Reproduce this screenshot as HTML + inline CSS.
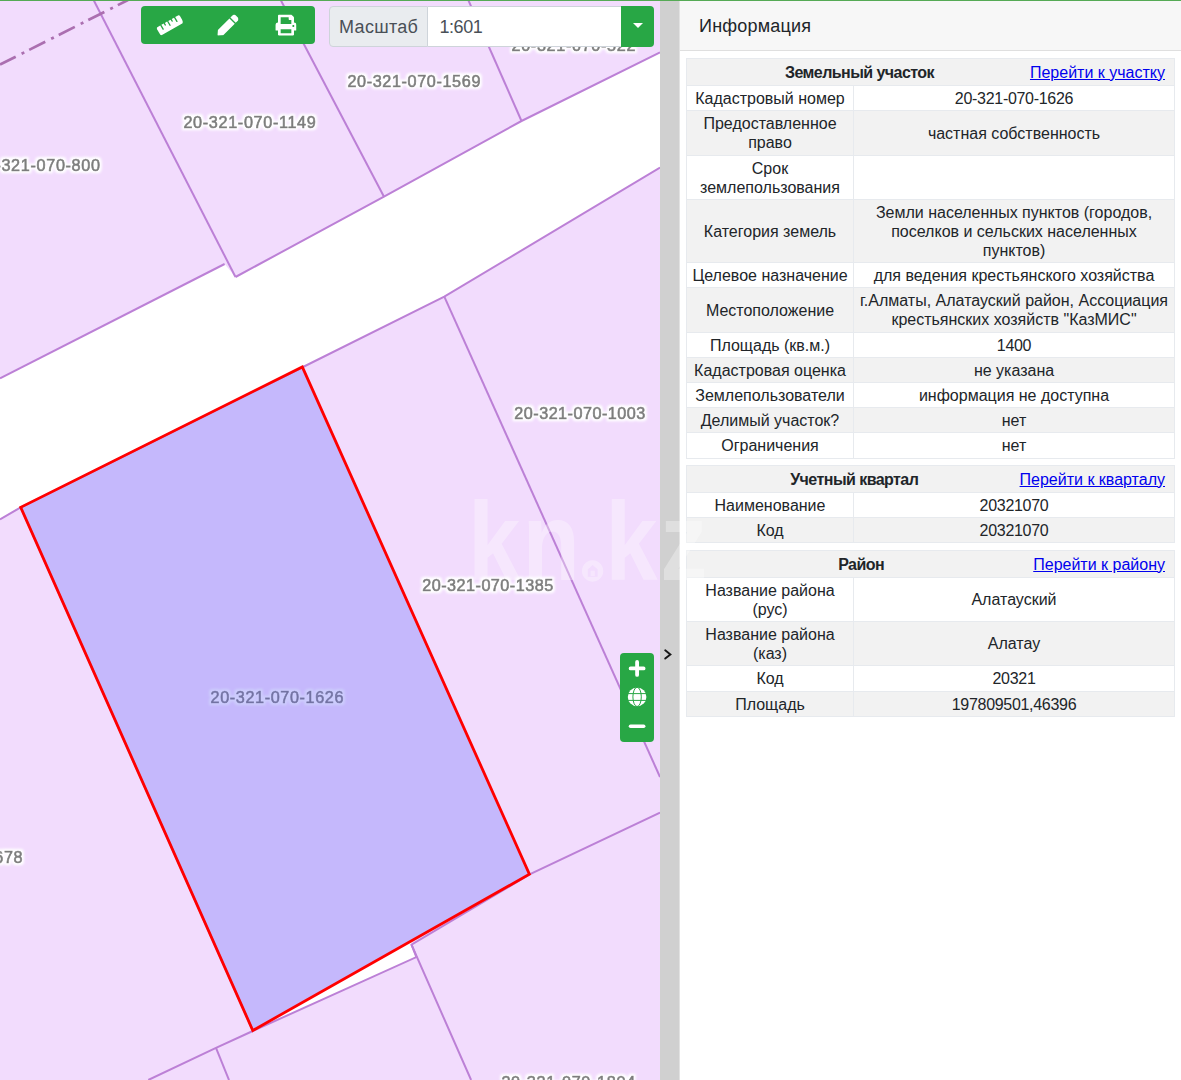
<!DOCTYPE html>
<html lang="ru">
<head>
<meta charset="utf-8">
<title>Информация</title>
<style>
*{box-sizing:border-box}
html,body{margin:0;padding:0}
body{width:1181px;height:1080px;overflow:hidden;position:relative;background:#fff;
  font-family:"Liberation Sans",sans-serif;font-size:16px;color:#212529}
#topline{position:absolute;left:0;top:0;width:1181px;height:1px;background:#55aa55;z-index:20}
#map{position:absolute;left:0;top:0;width:660px;height:1080px;overflow:hidden;background:#fff}
#map svg{position:absolute;left:0;top:0}
.lbl{font-family:"Liberation Sans",sans-serif;font-weight:normal;font-size:16.2px;fill:#7c7c7c;stroke:#7c7c7c;stroke-width:.7px;filter:url(#halo)}
#split{position:absolute;left:660px;top:0;width:20px;height:1080px;background:#d0d0d0;border-right:1px solid #e2e2e2}
#split svg{position:absolute;left:3px;top:648px}
#tools{position:absolute;left:140.8px;top:5.8px;width:174.4px;height:38.6px;background:#28a745;border-radius:4px;display:flex}
#tools div{width:58px;height:38px;position:relative}
#tools svg{position:absolute;left:50%;top:50%;transform:translate(-50%,-49%)}
#scale{position:absolute;left:328.6px;top:6px;width:325.6px;height:40.6px;display:flex;font-size:18px}
#scale .addon{width:99.5px;height:40.6px;background:#e9ecef;border:1px solid #ced4da;border-radius:4px 0 0 4px;
  color:#495057;line-height:41px;padding-left:9.5px;white-space:nowrap;letter-spacing:.3px;overflow:hidden}
#scale .inp{flex:1;height:40.6px;background:#fff;border:1px solid #ced4da;border-left:0;border-right:0;color:#495057;line-height:40.4px;padding-left:11.3px;letter-spacing:-.4px;overflow:hidden}
#scale .dd{width:33px;height:40.6px;background:#28a745;border-radius:0 4px 4px 0;position:relative}
#scale .dd i{position:absolute;left:11.6px;top:17.4px;border:5.4px solid transparent;border-top:5.4px solid #fff;border-bottom:0}
#zoomc{position:absolute;left:620.4px;top:653.2px;width:34px;height:88.7px;background:#28a745;border-radius:4px}
#zoomc svg{position:absolute;left:0;top:0}
#wm{position:absolute;left:450px;top:480px;z-index:15;pointer-events:none}
#info{position:absolute;left:680px;top:0;width:501px;height:1080px;background:#fff}
#info h1{margin:0;height:51px;padding:16px 0 0 19px;font-size:18px;letter-spacing:.2px;font-weight:normal;background:#f7f7f7;border-bottom:1px solid #dfdfdf;line-height:20px;color:#212529}
table{position:absolute;left:6px;width:489px;border-collapse:collapse;table-layout:fixed;font-size:16px}
td,th{border:1px solid #e7eaee;padding:0 2px;text-align:center;vertical-align:middle;line-height:19px;white-space:nowrap;overflow:hidden}
th{height:27px;font-weight:bold;letter-spacing:-.55px}
th a{float:right;font-weight:normal;color:#0000ee;text-decoration:underline;padding-right:7px;letter-spacing:0}
tr.g td,tr.g th{background:#f2f2f2}
tr.h1 td{height:25px}
tr.h2 td{height:45px}
tr.h3 td{height:63px}
tr.h2.s td{height:44px}
tr.h1.p td{height:26px}
col.c1{width:167px}
td.n{letter-spacing:-.3px}
</style>
</head>
<body>
<div id="topline"></div>
<div id="map">
<!--MAPSVG-->
<svg width="660" height="1080" viewBox="0 0 660 1080">
<defs><filter id="halo" x="-5%" y="-25%" width="110%" height="150%"><feMorphology in="SourceAlpha" operator="dilate" radius="1.5" result="d"/><feGaussianBlur in="d" stdDeviation="0.8" result="b"/><feFlood flood-color="#fff" flood-opacity="1"/><feComposite in2="b" operator="in" result="h"/><feMerge><feMergeNode in="h"/><feMergeNode in="SourceGraphic"/></feMerge></filter></defs>
<rect width="660" height="1080" fill="#f2dcfd"/>
<polygon fill="#fff" points="0,378.3 224.6,264 235.5,277 384,196.7 521.5,121 660,52.4 660,167.6 444.3,296.7 303,367 20.7,507.3 0,519.4"/>
<polygon fill="#fff" points="252.8,1030.6 411.5,941.5 411.5,944.7 416.4,957.1"/>
<g fill="none" stroke="#bc80d6" stroke-width="2">
<path d="M93.6,0 L235.5,277"/>
<path d="M0,378.3 L224.6,264"/>
<path d="M235.5,277 L384,196.7 L521.5,121 L660,52.4"/>
<path d="M280.7,0 L384,196.7"/>
<path d="M468.3,0 L521.5,121"/>
<path d="M0,519.4 L20.7,507.3 L303,367 L444.3,296.7 L660,167.6"/>
<path d="M444.3,296.7 L660,777"/>
<path d="M20.7,507.3 L252.8,1030.5"/>
<path d="M660,812.6 L529.6,874.4 L411.5,944.7 L471.1,1080"/>
<path d="M148.3,1080 L216,1047.8 L252.8,1031 L416.4,957.1 L411.5,944.7"/>
<path d="M216,1047.8 L229,1080"/>
</g>
<path d="M0,64.6 L128,0" fill="none" stroke="#ab6fb0" stroke-width="2.7" stroke-dasharray="18 6.6 3 5.5" stroke-dashoffset="0.4"/>
<g>
<text class="lbl" x="183.4" y="127.7" textLength="132.4" lengthAdjust="spacing">20-321-070-1149</text>
<text class="lbl" x="347.4" y="87.4" textLength="133.0" lengthAdjust="spacing">20-321-070-1569</text>
<text class="lbl" x="511.5" y="51" textLength="123.9" lengthAdjust="spacing">20-321-070-522</text>
<text class="lbl" x="-24.0" y="170.6" textLength="124.0" lengthAdjust="spacing">20-321-070-800</text>
<text class="lbl" x="514.3" y="418.9" textLength="131.0" lengthAdjust="spacing">20-321-070-1003</text>
<text class="lbl" x="422.2" y="590.9" textLength="131.0" lengthAdjust="spacing">20-321-070-1385</text>
<text class="lbl" style="fill:#686868;stroke:#686868" x="210.6" y="702.6" textLength="132.8" lengthAdjust="spacing">20-321-070-1626</text>
<text class="lbl" x="-101.0" y="862.9" textLength="123.6" lengthAdjust="spacing">20-321-070-678</text>
<text class="lbl" x="501.4" y="1087.9" textLength="133.8" lengthAdjust="spacing">20-321-070-1804</text>
</g>
<polygon points="302.3,366.9 529.4,874.2 252.8,1030.5 20.7,507.3" fill="rgb(130,130,250)" fill-opacity=".4" stroke="none"/>
<polygon points="302.3,366.9 529.4,874.2 252.8,1030.5 20.7,507.3" fill="none" stroke="#ff0000" stroke-width="2.8" stroke-linejoin="miter"/>
</svg>
<!--/MAPSVG-->
</div>
<div id="tools"><div><svg width="26.67" height="21.33" viewBox="0 0 640 512"><path fill="#fff" d="M635.7 167.2L556.1 31.7c-8.8-15-28.3-20.1-43.5-11.5l-69 39.1L503.3 161c2.200 3.800.900 8.500-2.900 10.700l-13.800 7.800c-3.800 2.200-8.700.9-10.900-2.900L416 75l-55.200 31.300 27.900 47.400c2.200 3.800.9 8.500-2.900 10.700l-13.800 7.800c-3.800 2.200-8.700.9-10.900-2.900L333.200 122 278 153.300 337.800 255c2.200 3.700.9 8.500-2.900 10.700l-13.800 7.800c-3.800 2.200-8.700.9-10.900-2.900l-59.700-101.700-55.200 31.300 27.900 47.400c2.200 3.800.9 8.500-2.900 10.700l-13.800 7.800c-3.800 2.200-8.700.9-10.900-2.900l-27.900-47.500-55.200 31.300 59.700 101.700c2.200 3.700.9 8.500-2.900 10.700l-13.800 7.800c-3.800 2.200-8.700.9-10.900-2.900L84.900 262.900l-69 39.100C.7 310.700-4.600 329.800 4.200 344.800l79.600 135.600c8.800 15 28.300 20.100 43.500 11.500L624.100 210c15.200-8.600 20.400-27.800 11.600-42.800z"/></svg></div><div><svg width="21.33" height="21.33" viewBox="0 0 512 512"><path fill="#fff" d="M290.74 93.24l128.02 128.02-277.99 277.99-114.14 12.6C11.35 513.54-1.56 500.62.14 485.34l12.7-114.22 277.9-277.88zm207.2-19.06l-60.11-60.11c-18.75-18.75-49.16-18.75-67.91 0l-56.55 56.55 128.02 128.02 56.55-56.55c18.75-18.76 18.75-49.16 0-67.91z"/></svg></div><div><svg width="21.33" height="21.33" viewBox="0 0 512 512"><path fill="#fff" d="M448 192V77.25c0-8.49-3.37-16.62-9.37-22.63L393.370 9.370c-6-6-14.140-9.370-22.630-9.370H96C78.330 0 64 14.330 64 32v160c-35.350 0-64 28.650-64 64v112c0 8.840 7.160 16 16 16h48v96c0 17.670 14.330 32 32 32h320c17.670 0 32-14.330 32-32v-96h48c8.840 0 16-7.160 16-16V256c0-35.350-28.650-64-64-64zm-64 256H128v-96h256v96zm0-224H128V64h192v48c0 8.840 7.160 16 16 16h48v96zm48 72c-13.250 0-24-10.750-24-24 0-13.260 10.750-24 24-24s24 10.740 24 24c0 13.250-10.750 24-24 24z"/></svg></div></div>
<div id="scale"><div class="addon">Масштаб</div><div class="inp">1:601</div><div class="dd"><i></i></div></div>
<div id="zoomc"><svg width="34" height="89" viewBox="0 0 34 89">
<path d="M10.6,15.4H23.6M17.1,8.9V21.9" stroke="#fff" stroke-width="3.8" stroke-linecap="round" fill="none"/>
<circle cx="17.1" cy="43.9" r="9.3" fill="#fff"/>
<g stroke="#28a745" stroke-width="1" fill="none"><path d="M8,40.6H27M8,47.4H27"/><ellipse cx="17.1" cy="43.9" rx="4.2" ry="9.6"/></g>
<path d="M10.5,73.2H23.7" stroke="#fff" stroke-width="3.5" stroke-linecap="round" fill="none"/>
</svg></div>
<svg id="wm" width="280" height="120" viewBox="450 480 280 120"><g fill="#fff" fill-opacity=".33"><text transform="scale(0.84,1)" y="580" font-family="Liberation Sans, sans-serif" font-weight="bold" font-size="112"><tspan x="557.3 621.9">kn</tspan><tspan x="700.7" y="576.2" font-size="36">.</tspan><tspan x="720.7 786.0" y="580">kz</tspan></text><path fill-rule="evenodd" d="M592.6,560.3a10.7,10.7 0 1,0 .01,0zM592.6,565L597.6,569.2V576.8H587.8V569.2z"/></g></svg>
<div id="split"><svg width="14" height="14" viewBox="0 0 14 14"><path d="M2.2,2.3L7.4,6.4L2.2,10.6" stroke="#151515" stroke-width="1.9" fill="none" stroke-linecap="round" stroke-linejoin="miter"/></svg></div>
<div id="info">
<h1>Информация</h1>
<table style="top:58px">
<colgroup><col class="c1"><col></colgroup>
<tr class="g"><th colspan="2"><a>Перейти к участку</a>Земельный участок</th></tr>
<tr class="h1"><td>Кадастровый номер</td><td class="n">20-321-070-1626</td></tr>
<tr class="h2 g"><td>Предоставленное<br>право</td><td>частная собственность</td></tr>
<tr class="h2 s"><td>Срок<br>землепользования</td><td></td></tr>
<tr class="h3 g"><td>Категория земель</td><td>Земли населенных пунктов (городов,<br>поселков и сельских населенных<br>пунктов)</td></tr>
<tr class="h1"><td>Целевое назначение</td><td>для ведения крестьянского хозяйства</td></tr>
<tr class="h2 g"><td>Местоположение</td><td>г.Алматы, Алатауский район, Ассоциация<br>крестьянских хозяйств "КазМИС"</td></tr>
<tr class="h1"><td>Площадь (кв.м.)</td><td class="n">1400</td></tr>
<tr class="h1 g"><td>Кадастровая оценка</td><td>не указана</td></tr>
<tr class="h1"><td>Землепользователи</td><td>информация не доступна</td></tr>
<tr class="h1 g"><td>Делимый участок?</td><td>нет</td></tr>
<tr class="h1 p"><td>Ограничения</td><td>нет</td></tr>
</table>
<table style="top:465px">
<colgroup><col class="c1"><col></colgroup>
<tr class="g"><th colspan="2"><a>Перейти к кварталу</a>Учетный квартал</th></tr>
<tr class="h1"><td>Наименование</td><td class="n">20321070</td></tr>
<tr class="h1 g"><td>Код</td><td class="n">20321070</td></tr>
</table>
<table style="top:550px">
<colgroup><col class="c1"><col></colgroup>
<tr class="g"><th colspan="2"><a>Перейти к району</a>Район</th></tr>
<tr class="h2 s"><td>Название района<br>(рус)</td><td>Алатауский</td></tr>
<tr class="h2 s g"><td>Название района<br>(каз)</td><td>Алатау</td></tr>
<tr class="h1 p"><td>Код</td><td class="n">20321</td></tr>
<tr class="h1 g"><td>Площадь</td><td class="n">197809501,46396</td></tr>
</table>
</div>
</body>
</html>
